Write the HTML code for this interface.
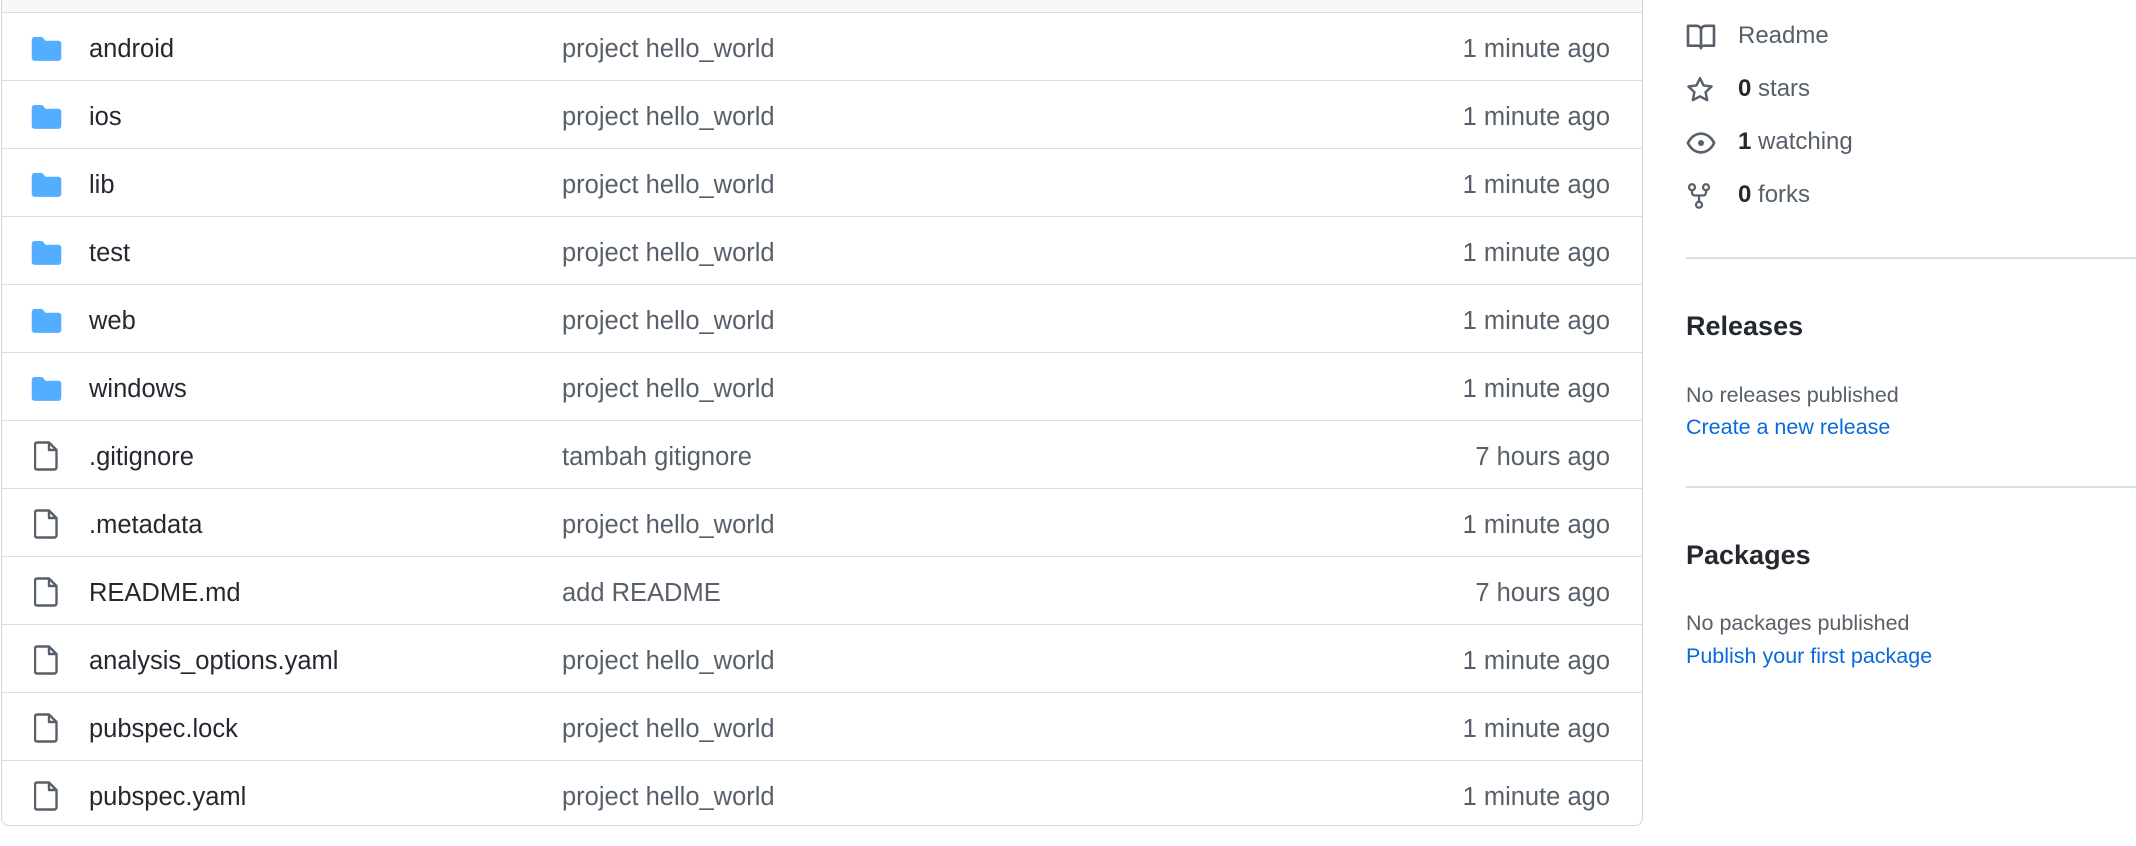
<!DOCTYPE html>
<html><head><meta charset="utf-8"><style>
*{margin:0;padding:0;box-sizing:border-box}
body{width:2136px;height:846px;background:#fff;font-family:"Liberation Sans",sans-serif;position:relative;overflow:hidden;color:#24292f}
.box{position:absolute;left:1px;top:-10px;width:1642px;height:836px;border:1.5px solid #d0d7de;border-radius:8px;overflow:hidden}
.hdr{height:22px;background:#f6f8fa;border-bottom:1.5px solid #d8dee4}
.row{height:68px;border-bottom:1.5px solid #d8dee4;position:relative;font-size:25.5px}
.row:last-child{border-bottom:none}
.ic{position:absolute;left:29px;top:24px}
.nm{position:absolute;left:87px;top:22px}
.msg{position:absolute;left:560px;top:22px;color:#57606a}
.tm{position:absolute;right:32px;top:22px;color:#57606a}
.side{position:absolute;left:1686px;font-size:24px;color:#57606a}
.side b{color:#24292f;font-weight:bold}
.si{position:absolute;left:1686px}
.hr{position:absolute;left:1686px;width:450px;height:1.5px;background:#d8dee4}
h2{position:absolute;left:1686px;font-size:27px;font-weight:bold;color:#24292f}
.sm{position:absolute;left:1686px;font-size:21.5px;color:#57606a}
.lk{position:absolute;left:1686px;font-size:21.5px;color:#0969da}
</style></head><body>
<div class="box"><div class="hdr"></div>
<div class="row"><svg class="ic" width="31" height="24" viewBox="0 0 16 13"><path d="M0 1.5C0 .7.7 0 1.5 0h3.6c.5 0 .9.2 1.2.6l.9 1.2c.1.1.2.2.4.2h6.9c.8 0 1.5.7 1.5 1.5v7.9c0 .8-.7 1.5-1.5 1.5h-13C.7 12.9 0 12.2 0 11.4z" fill="#54aeff"/></svg><span class="nm">android</span><span class="msg">project hello_world</span><span class="tm">1 minute ago</span></div>
<div class="row"><svg class="ic" width="31" height="24" viewBox="0 0 16 13"><path d="M0 1.5C0 .7.7 0 1.5 0h3.6c.5 0 .9.2 1.2.6l.9 1.2c.1.1.2.2.4.2h6.9c.8 0 1.5.7 1.5 1.5v7.9c0 .8-.7 1.5-1.5 1.5h-13C.7 12.9 0 12.2 0 11.4z" fill="#54aeff"/></svg><span class="nm">ios</span><span class="msg">project hello_world</span><span class="tm">1 minute ago</span></div>
<div class="row"><svg class="ic" width="31" height="24" viewBox="0 0 16 13"><path d="M0 1.5C0 .7.7 0 1.5 0h3.6c.5 0 .9.2 1.2.6l.9 1.2c.1.1.2.2.4.2h6.9c.8 0 1.5.7 1.5 1.5v7.9c0 .8-.7 1.5-1.5 1.5h-13C.7 12.9 0 12.2 0 11.4z" fill="#54aeff"/></svg><span class="nm">lib</span><span class="msg">project hello_world</span><span class="tm">1 minute ago</span></div>
<div class="row"><svg class="ic" width="31" height="24" viewBox="0 0 16 13"><path d="M0 1.5C0 .7.7 0 1.5 0h3.6c.5 0 .9.2 1.2.6l.9 1.2c.1.1.2.2.4.2h6.9c.8 0 1.5.7 1.5 1.5v7.9c0 .8-.7 1.5-1.5 1.5h-13C.7 12.9 0 12.2 0 11.4z" fill="#54aeff"/></svg><span class="nm">test</span><span class="msg">project hello_world</span><span class="tm">1 minute ago</span></div>
<div class="row"><svg class="ic" width="31" height="24" viewBox="0 0 16 13"><path d="M0 1.5C0 .7.7 0 1.5 0h3.6c.5 0 .9.2 1.2.6l.9 1.2c.1.1.2.2.4.2h6.9c.8 0 1.5.7 1.5 1.5v7.9c0 .8-.7 1.5-1.5 1.5h-13C.7 12.9 0 12.2 0 11.4z" fill="#54aeff"/></svg><span class="nm">web</span><span class="msg">project hello_world</span><span class="tm">1 minute ago</span></div>
<div class="row"><svg class="ic" width="31" height="24" viewBox="0 0 16 13"><path d="M0 1.5C0 .7.7 0 1.5 0h3.6c.5 0 .9.2 1.2.6l.9 1.2c.1.1.2.2.4.2h6.9c.8 0 1.5.7 1.5 1.5v7.9c0 .8-.7 1.5-1.5 1.5h-13C.7 12.9 0 12.2 0 11.4z" fill="#54aeff"/></svg><span class="nm">windows</span><span class="msg">project hello_world</span><span class="tm">1 minute ago</span></div>
<div class="row"><svg class="ic" style="left:32px;top:20px" width="24" height="30" viewBox="0 0 12 15"><path d="M1.5.75h6l3.75 3.75v8.75a1 1 0 0 1-1 1h-8.75a1 1 0 0 1-1-1V1.75a1 1 0 0 1 1-1zM7.5.75v3.75h3.75" fill="none" stroke="#57606a" stroke-width="1.2" stroke-linejoin="round"/></svg><span class="nm">.gitignore</span><span class="msg">tambah gitignore</span><span class="tm">7 hours ago</span></div>
<div class="row"><svg class="ic" style="left:32px;top:20px" width="24" height="30" viewBox="0 0 12 15"><path d="M1.5.75h6l3.75 3.75v8.75a1 1 0 0 1-1 1h-8.75a1 1 0 0 1-1-1V1.75a1 1 0 0 1 1-1zM7.5.75v3.75h3.75" fill="none" stroke="#57606a" stroke-width="1.2" stroke-linejoin="round"/></svg><span class="nm">.metadata</span><span class="msg">project hello_world</span><span class="tm">1 minute ago</span></div>
<div class="row"><svg class="ic" style="left:32px;top:20px" width="24" height="30" viewBox="0 0 12 15"><path d="M1.5.75h6l3.75 3.75v8.75a1 1 0 0 1-1 1h-8.75a1 1 0 0 1-1-1V1.75a1 1 0 0 1 1-1zM7.5.75v3.75h3.75" fill="none" stroke="#57606a" stroke-width="1.2" stroke-linejoin="round"/></svg><span class="nm">README.md</span><span class="msg">add README</span><span class="tm">7 hours ago</span></div>
<div class="row"><svg class="ic" style="left:32px;top:20px" width="24" height="30" viewBox="0 0 12 15"><path d="M1.5.75h6l3.75 3.75v8.75a1 1 0 0 1-1 1h-8.75a1 1 0 0 1-1-1V1.75a1 1 0 0 1 1-1zM7.5.75v3.75h3.75" fill="none" stroke="#57606a" stroke-width="1.2" stroke-linejoin="round"/></svg><span class="nm">analysis_options.yaml</span><span class="msg">project hello_world</span><span class="tm">1 minute ago</span></div>
<div class="row"><svg class="ic" style="left:32px;top:20px" width="24" height="30" viewBox="0 0 12 15"><path d="M1.5.75h6l3.75 3.75v8.75a1 1 0 0 1-1 1h-8.75a1 1 0 0 1-1-1V1.75a1 1 0 0 1 1-1zM7.5.75v3.75h3.75" fill="none" stroke="#57606a" stroke-width="1.2" stroke-linejoin="round"/></svg><span class="nm">pubspec.lock</span><span class="msg">project hello_world</span><span class="tm">1 minute ago</span></div>
<div class="row"><svg class="ic" style="left:32px;top:20px" width="24" height="30" viewBox="0 0 12 15"><path d="M1.5.75h6l3.75 3.75v8.75a1 1 0 0 1-1 1h-8.75a1 1 0 0 1-1-1V1.75a1 1 0 0 1 1-1zM7.5.75v3.75h3.75" fill="none" stroke="#57606a" stroke-width="1.2" stroke-linejoin="round"/></svg><span class="nm">pubspec.yaml</span><span class="msg">project hello_world</span><span class="tm">1 minute ago</span></div>
</div>

<svg class="si" style="top:24px" width="30" height="26" viewBox="0 0 16 14"><path d="M1 1h4.5c1.4 0 2.5 1 2.5 2.3V13c0-.8-.8-1.3-1.7-1.3H1zM15 1h-4.5C9.1 1 8 2 8 3.3V13c0-.8.8-1.3 1.7-1.3H15z" fill="none" stroke="#57606a" stroke-width="1.4" stroke-linejoin="round"/></svg>
<div class="side" style="top:22px;left:1738px">Readme</div>
<svg class="si" style="top:76px" width="28" height="28" viewBox="0 0 16 16"><path d="M8 1.2l2 4.2 4.6.6-3.4 3.2.9 4.6L8 11.6l-4.1 2.2.9-4.6L1.4 6l4.6-.6z" fill="none" stroke="#57606a" stroke-width="1.4" stroke-linejoin="round"/></svg>
<div class="side" style="top:75px;left:1738px"><b>0</b> stars</div>
<svg class="si" style="top:131px" width="30" height="24" viewBox="0 0 16 12"><path d="M1 6C2.5 3 5 1 8 1s5.5 2 7 5c-1.5 3-4 5-7 5S2.5 9 1 6z" fill="none" stroke="#57606a" stroke-width="1.4"/><circle cx="8" cy="6" r="1.6" fill="#57606a"/></svg>
<div class="side" style="top:128px;left:1738px"><b>1</b> watching</div>
<svg class="si" style="top:182px" width="26" height="28" viewBox="0 0 14 16"><circle cx="3" cy="3" r="1.7" fill="none" stroke="#57606a" stroke-width="1.3"/><circle cx="11" cy="3" r="1.7" fill="none" stroke="#57606a" stroke-width="1.3"/><circle cx="7" cy="13" r="1.7" fill="none" stroke="#57606a" stroke-width="1.3"/><path d="M3 4.7V6c0 1 .7 1.7 1.7 1.7h4.6c1 0 1.7-.7 1.7-1.7V4.7M7 7.7v3.6" fill="none" stroke="#57606a" stroke-width="1.3"/></svg>
<div class="side" style="top:181px;left:1738px"><b>0</b> forks</div>

<div class="hr" style="top:257px"></div>
<h2 style="top:311px">Releases</h2>
<div class="sm" style="top:383px">No releases published</div>
<div class="lk" style="top:415px">Create a new release</div>
<div class="hr" style="top:486px"></div>
<h2 style="top:540px">Packages</h2>
<div class="sm" style="top:611px">No packages published</div>
<div class="lk" style="top:644px">Publish your first package</div>
</body></html>
